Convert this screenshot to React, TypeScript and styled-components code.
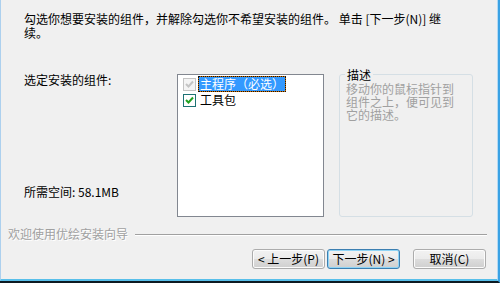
import styled, { createGlobalStyle } from "styled-components";

const GlobalStyle = createGlobalStyle`
  html, body {
    margin: 0;
    padding: 0;
    background: #f0f0f0;
  }
  * {
    box-sizing: border-box;
  }
`;

const Frame = styled.div`
  width: 500px;
  height: 283px;
  border-bottom: 2px solid #0d1a22;
  border-right: 2px solid #3aa2e4;
  font-family: "Noto Sans CJK SC", "DejaVu Sans", sans-serif;
  font-size: 12px;
  color: #000;
`;

const Dialog = styled.div`
  height: 100%;
  background: #f0f0f0;
  border-left: 1px solid #acd0ee;
  border-right: 1px solid #b4daf4;
  border-bottom: 2px solid #58bfea;
  display: flex;
  flex-direction: column;
`;

const Intro = styled.div`
  height: 74px;
  padding: 12px 0 0 23px;
  line-height: 14px;
`;

const Body = styled.div`
  height: 143px;
  display: flex;
  padding-left: 23px;
`;

const LeftColumn = styled.div`
  width: 153px;
  display: flex;
  flex-direction: column;
  justify-content: space-between;
  line-height: 14px;
  margin-top: -1px;
  padding-bottom: 18px;
`;

const ListBox = styled.div`
  width: 147px;
  height: 143px;
  background: #fff;
  border: 1px solid #828790;
  padding: 1px 0 0 5px;
`;

const Item = styled.div`
  display: flex;
  align-items: center;
  height: 16px;
  gap: 2px;
`;

const Check = styled.span<{ $disabled?: boolean }>`
  width: 13px;
  height: 13px;
  flex: none;
  display: flex;
  align-items: center;
  justify-content: center;
  background: ${(p) => (p.$disabled ? "#f4f4f4" : "#fff")};
  border: 1px solid ${(p) => (p.$disabled ? "#c4c4c4" : "#1c7274")};
`;

const ItemLabel = styled.span<{ $selected?: boolean }>`
  height: 16px;
  line-height: 14px;
  padding: 0 1px;
  border: 1px solid transparent;
  ${(p) =>
    p.$selected
      ? `
    color: #fff;
    border: 1px dotted #111;
    background: linear-gradient(#3399ff, #3399ff) padding-box, #d07000 border-box;
  `
      : ""}
`;

const Group = styled.fieldset`
  width: 134px;
  height: 149px;
  margin: -6px 0 0 15px;
  padding: 0 6px;
  border: 1px solid #d5dfe5;
  border-radius: 3px;
  min-width: 0;
`;

const Legend = styled.legend`
  padding: 0 2px;
  margin-left: -1px;
  line-height: 13px;
  color: #000;
`;

const Hint = styled.div`
  width: 112px;
  line-height: 13px;
  color: #a0a0a0;
  margin-top: 1px;
`;

const Brand = styled.div`
  display: flex;
  align-items: center;
  gap: 7px;
  margin: 10px 10px 0 7px;
  line-height: 14px;
  color: #a0a0a0;
  text-shadow: 1px 1px 0 #fff;
`;

const Rule = styled.div`
  flex: 1;
  height: 2px;
  margin-top: 1px;
  border-top: 1px solid #a0a0a0;
  border-bottom: 1px solid #fff;
`;

const Buttons = styled.div`
  display: flex;
  justify-content: flex-end;
  margin: 8px 11px 0 0;
`;

const Button = styled.button<{ $primary?: boolean; $gap?: number }>`
  width: 73px;
  height: 20px;
  margin-left: ${(p) => p.$gap ?? 0}px;
  padding: 0;
  font-family: inherit;
  font-size: 12px;
  line-height: 16px;
  color: #000;
  border-radius: 3px;
  border: 1px solid ${(p) => (p.$primary ? "#3c7fb1" : "#acacac")};
  background: linear-gradient(#f2f2f2, #ebebeb 50%, #dddddd 51%, #cfcfcf);
  box-shadow: inset 0 0 0 1px ${(p) => (p.$primary ? "#8fd4f6" : "#fcfcfc")};
`;

const CheckMark = ({ color }: { color: string }) => (
  <svg width="9" height="9" viewBox="0 0 9 9">
    <path d="M1 4 L3.5 6.5 L8 1.5" fill="none" stroke={color} strokeWidth="2" />
  </svg>
);

const ComponentsPage = () => {
  return (
    <Frame>
      <GlobalStyle />
      <Dialog>
        <Intro>
          勾选你想要安装的组件，并解除勾选你不希望安装的组件。 单击 [下一步(N)] 继
          <br />
          续。
        </Intro>
        <Body>
          <LeftColumn>
            <span>选定安装的组件:</span>
            <span>所需空间: 58.1MB</span>
          </LeftColumn>
          <ListBox>
            <Item>
              <Check $disabled>
                <CheckMark color="#c4c4c4" />
              </Check>
              <ItemLabel $selected>主程序（必选）</ItemLabel>
            </Item>
            <Item>
              <Check>
                <CheckMark color="#21a121" />
              </Check>
              <ItemLabel>工具包</ItemLabel>
            </Item>
          </ListBox>
          <Group>
            <Legend>描述</Legend>
            <Hint>移动你的鼠标指针到组件之上，便可见到它的描述。</Hint>
          </Group>
        </Body>
        <Brand>
          欢迎使用优绘安装向导
          <Rule />
        </Brand>
        <Buttons>
          <Button>&lt; 上一步(P)</Button>
          <Button $primary $gap={2}>
            下一步(N) &gt;
          </Button>
          <Button $gap={13}>取消(C)</Button>
        </Buttons>
      </Dialog>
    </Frame>
  );
};

export default ComponentsPage;
